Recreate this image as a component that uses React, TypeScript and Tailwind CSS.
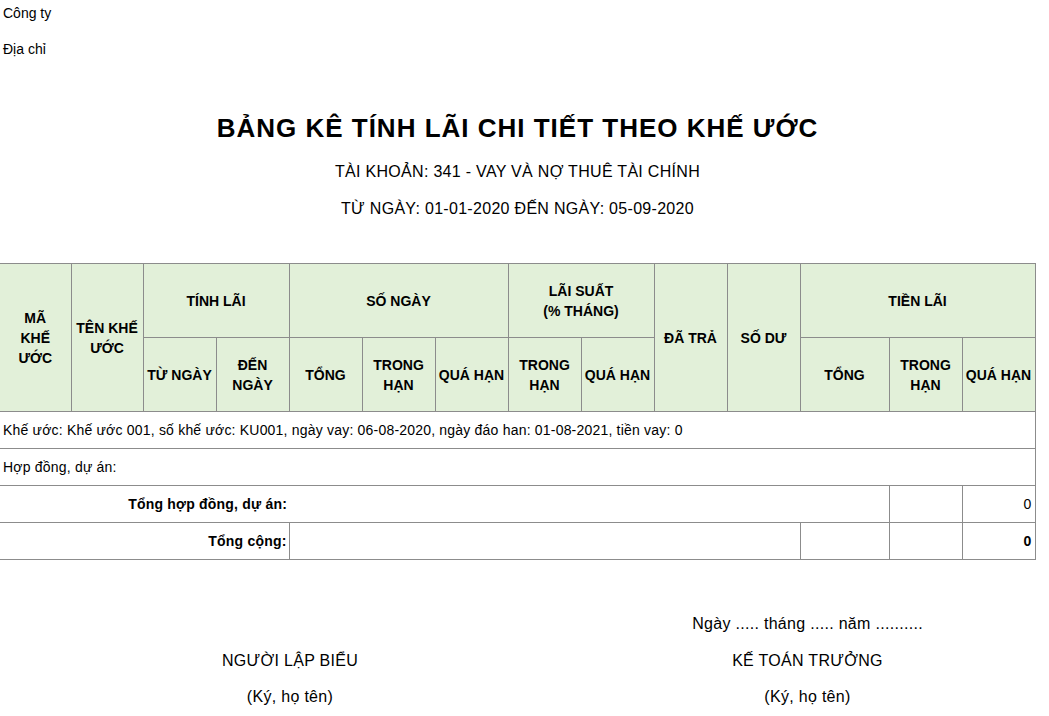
const cell = "border border-[#8c8c8c]"

type HeadProps = {
  children: React.ReactNode
  className?: string
  rowSpan?: number
  colSpan?: number
}

function Head({ children, className = "", rowSpan, colSpan }: HeadProps) {
  return (
    <th
      rowSpan={rowSpan}
      colSpan={colSpan}
      className={`${cell} bg-[#e2f0d9] font-bold text-[14px] leading-[20px] text-center align-middle px-[2px] ${className}`}
    >
      {children}
    </th>
  )
}

export default function App() {
  const cols = [71, 72, 73, 73, 73, 73, 73, 73, 73, 73, 73, 89, 73, 73]
  return (
    <div className="w-[1049px] bg-white text-black" style={{ fontFamily: "'Liberation Sans', Arial, sans-serif" }}>
      <div className="w-[1035px]">
        <div className="pl-[3px] pt-[4px] text-[14px] leading-[18px]">Công ty</div>
        <div className="pl-[3px] pt-[18px] text-[14px] leading-[18px]">Địa chỉ</div>

        <h1 className="mt-[55px] text-center font-bold text-[26px] leading-[30px] tracking-[1px]">
          BẢNG KÊ TÍNH LÃI CHI TIẾT THEO KHẾ ƯỚC
        </h1>
        <div className="mt-[19px] text-center text-[16px] leading-[20px] tracking-[0.3px]">
          TÀI KHOẢN: 341 - VAY VÀ NỢ THUÊ TÀI CHÍNH
        </div>
        <div className="mt-[17px] text-center text-[16px] leading-[20px] tracking-[0.3px]">
          TỪ NGÀY: 01-01-2020 ĐẾN NGÀY: 05-09-2020
        </div>

        <table className="mt-[44px] w-[1035px] table-fixed border-collapse text-[14px]">
          <colgroup>
            {cols.map((w, i) => (
              <col key={i} style={{ width: w }} />
            ))}
          </colgroup>
          <thead>
            <tr className="h-[74px]">
              <Head className="border-l-0" rowSpan={2}>MÃ<br />KHẾ<br />ƯỚC</Head>
              <Head rowSpan={2}>TÊN KHẾ ƯỚC</Head>
              <Head colSpan={2}>TÍNH LÃI</Head>
              <Head colSpan={3}>SỐ NGÀY</Head>
              <Head colSpan={2}>LÃI SUẤT<br />(% THÁNG)</Head>
              <Head rowSpan={2}>ĐÃ TRẢ</Head>
              <Head rowSpan={2}>SỐ DƯ</Head>
              <Head colSpan={3}>TIỀN LÃI</Head>
            </tr>
            <tr className="h-[74px]">
              <Head>TỪ NGÀY</Head>
              <Head>ĐẾN NGÀY</Head>
              <Head>TỔNG</Head>
              <Head>TRONG HẠN</Head>
              <Head>QUÁ HẠN</Head>
              <Head>TRONG HẠN</Head>
              <Head>QUÁ HẠN</Head>
              <Head>TỔNG</Head>
              <Head>TRONG HẠN</Head>
              <Head>QUÁ HẠN</Head>
            </tr>
          </thead>
          <tbody className="tracking-[0.2px]">
            <tr className="h-[37px]">
              <td colSpan={14} className={`${cell} border-l-0 px-[3px] whitespace-nowrap`}>
                Khế ước: Khế ước 001, số khế ước: KU001, ngày vay: 06-08-2020, ngày đáo han: 01-08-2021, tiền vay: 0
              </td>
            </tr>
            <tr className="h-[37px]">
              <td colSpan={14} className={`${cell} border-l-0 px-[3px]`}>
                Hợp đồng, dự án:
              </td>
            </tr>
            <tr className="h-[37px]">
              <td colSpan={4} className={`${cell} border-l-0 border-r-0 px-[2px] text-right font-bold whitespace-nowrap`}>
                Tổng hợp đồng, dự án:
              </td>
              <td colSpan={8} className={`${cell} border-l-0`} />
              <td className={cell} />
              <td className={`${cell} px-[3px] text-right`}>0</td>
            </tr>
            <tr className="h-[37px]">
              <td colSpan={4} className={`${cell} border-l-0 px-[2px] text-right font-bold`}>
                Tổng cộng:
              </td>
              <td colSpan={7} className={cell} />
              <td className={cell} />
              <td className={cell} />
              <td className={`${cell} px-[3px] text-right font-bold`}>0</td>
            </tr>
          </tbody>
        </table>

        <div className="mt-[54px] grid grid-cols-[580px_1fr] text-[16px] leading-[20px] tracking-[0.3px]">
          <div />
          <div className="text-center">Ngày ..... tháng ..... năm ..........</div>
          <div className="mt-[17px] text-center">NGƯỜI LẬP BIỂU</div>
          <div className="mt-[17px] text-center">KẾ TOÁN TRƯỞNG</div>
          <div className="mt-[16px] text-center">(Ký, họ tên)</div>
          <div className="mt-[16px] text-center">(Ký, họ tên)</div>
        </div>
      </div>
    </div>
  )
}
